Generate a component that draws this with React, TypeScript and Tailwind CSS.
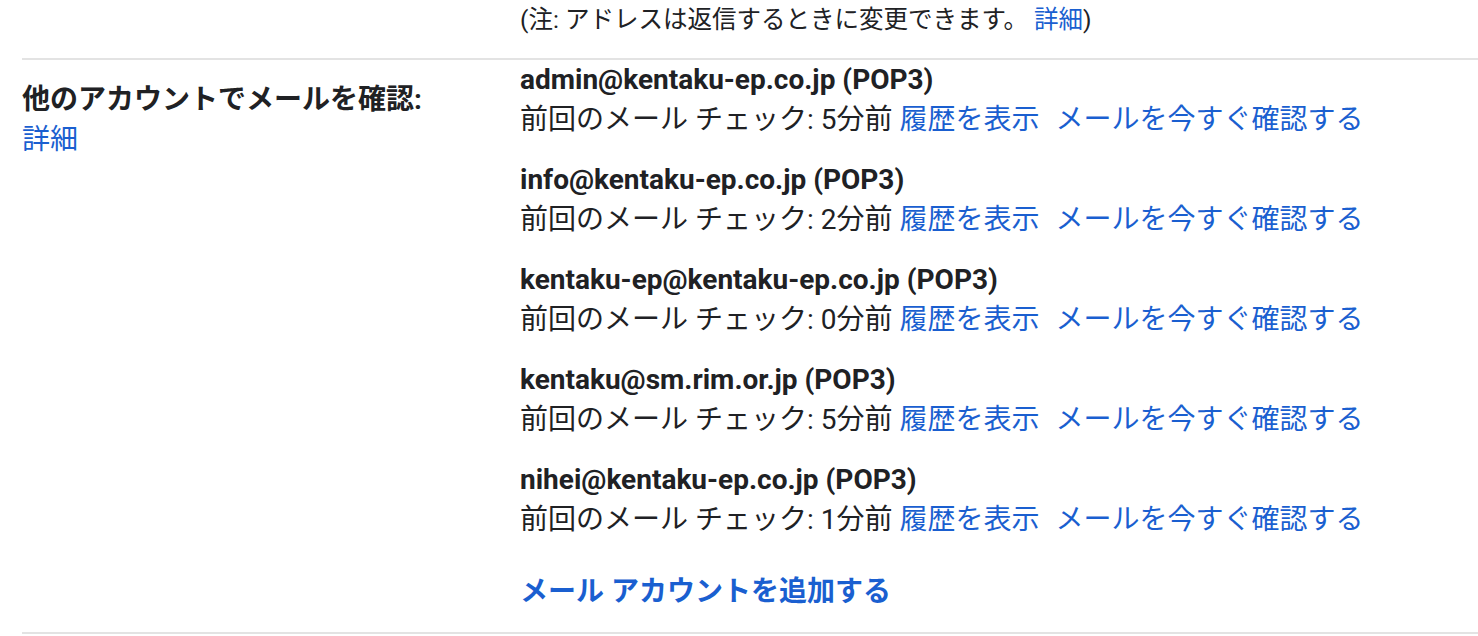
import React from "react";

const accounts = [
  { email: "admin@kentaku-ep.co.jp", ago: "5分前" },
  { email: "info@kentaku-ep.co.jp", ago: "2分前" },
  { email: "kentaku-ep@kentaku-ep.co.jp", ago: "0分前" },
  { email: "kentaku@sm.rim.or.jp", ago: "5分前" },
  { email: "nihei@kentaku-ep.co.jp", ago: "1分前" },
];

const font =
  "font-['Roboto','Noto_Sans_CJK_JP',sans-serif] text-[28px] leading-[40px] text-[#202124]";

const App = () => {
  return (
    <div className={`min-h-[636px] w-[1478px] bg-white ${font}`}>
      <div className="pl-[520px] h-[58px] text-[24.5px] leading-[39px]">
        (注: アドレスは返信するときに変更できます。{" "}
        <a className="text-[#1a5fd0] cursor-pointer">詳細</a>)
      </div>

      <div className="ml-[22px] flex border-y-2 border-[#e3e3e3] pb-5">
        <div className="w-[498px] shrink-0 pt-5">
          <div className="font-bold">他のアカウントでメールを確認:</div>
          <a className="text-[#1a5fd0] cursor-pointer">詳細</a>
        </div>

        <div className="flex flex-col gap-5">
          {accounts.map((acc) => (
            <div key={acc.email}>
              <div className="font-bold">{acc.email} (POP3)</div>
              <div>
                前回のメール チェック: {acc.ago}{" "}
                <a className="text-[#1a5fd0] cursor-pointer">履歴を表示</a>
                <a className="text-[#1a5fd0] cursor-pointer ml-4">
                  メールを今すぐ確認する
                </a>
              </div>
            </div>
          ))}
          <div className="pt-3 font-bold text-[#1a5fd0]">
            <a className="cursor-pointer">メール アカウントを追加する</a>
          </div>
        </div>
      </div>
    </div>
  );
};

export default App;
